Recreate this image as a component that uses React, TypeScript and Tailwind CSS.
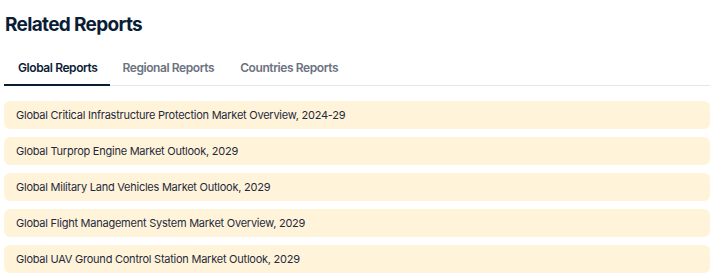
import { useState } from "react";

const tabs = ["Global Reports", "Regional Reports", "Countries Reports"];

const reports = [
  "Global Critical Infrastructure Protection Market Overview, 2024-29",
  "Global Turprop Engine Market Outlook, 2029",
  "Global Military Land Vehicles Market Outlook, 2029",
  "Global Flight Management System Market Overview, 2029",
  "Global UAV Ground Control Station Market Outlook, 2029",
];

const App = () => {
  const [active, setActive] = useState(0);

  return (
    <div className="bg-white px-1 pt-[13px] font-['Inter',sans-serif] w-[714px] h-[279px]">
      <h2 className="pl-px text-[19px] leading-6 font-bold tracking-[-0.035em] text-[#0b1d36]">Related Reports</h2>
      <div className="mt-[18px] flex border-b border-[#e5e7eb]">
        {tabs.map((tab, i) => (
          <button
            key={tab}
            onClick={() => setActive(i)}
            className={
              i === active
                ? "-mb-px border-b-2 border-[#0b1d36] pl-[14px] pr-[12px] pt-[3px] pb-[6px] text-[12px] leading-5 font-semibold tracking-[-0.035em] text-[#0b1d36]"
                : "-mb-px border-b-2 border-transparent px-[13px] pt-[3px] pb-[6px] text-[12px] leading-5 font-semibold tracking-[-0.035em] text-[#6b7280]"
            }
          >
            {tab}
          </button>
        ))}
      </div>
      <div className="mt-[15px] flex flex-col gap-2">
        {reports.map((r) => (
          <a
            key={r}
            href="#"
            className="block h-[28px] rounded-md bg-[#fff4da] px-3 text-[11px] leading-[28px] tracking-[-0.022em] text-[#1f2a3c]"
          >
            {r}
          </a>
        ))}
      </div>
    </div>
  );
};

export default App;
